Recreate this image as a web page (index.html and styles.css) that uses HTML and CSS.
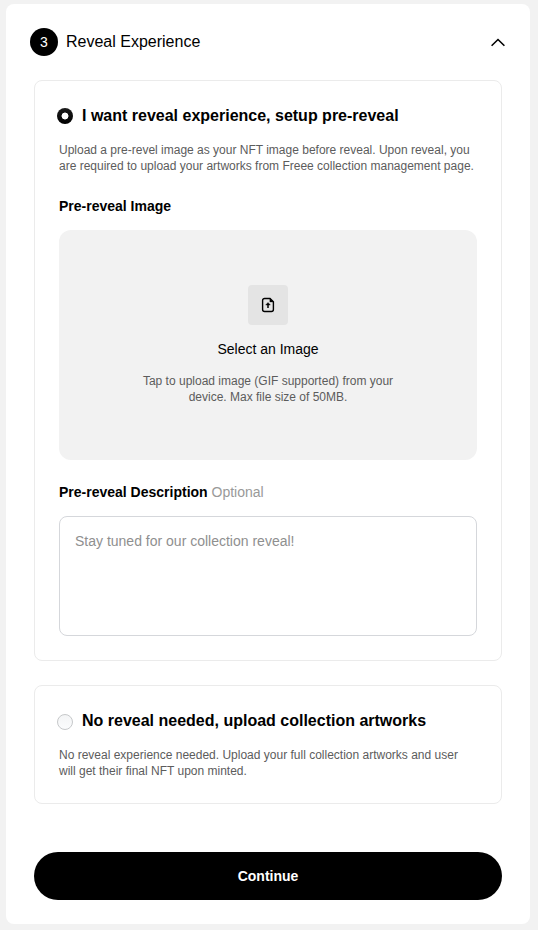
FILE: index.html
```html
<!DOCTYPE html>
<html lang="en">
<head>
<meta charset="utf-8">
<title>Reveal Experience</title>
<link rel="stylesheet" href="styles.css">
</head>
<body>
<main class="panel">
  <header class="head">
    <span class="step">3</span>
    <h1 class="title">Reveal Experience</h1>
    <svg class="chevron" width="16" height="10" viewBox="0 0 16 10"><path d="M1.600 8.800 8 2.500l6.400 6.300" fill="none" stroke="#000" stroke-width="1.600"/></svg>
  </header>
  <section class="card card-reveal">
    <div class="option"><span class="radio radio-on"></span><h2 class="option-title">I want reveal experience, setup pre-reveal</h2></div>
    <p class="note">Upload a pre-revel image as your NFT image before reveal. Upon reveal, you<br>are required to upload your artworks from Freee collection management page.</p>
    <h3 class="label">Pre-reveal Image</h3>
    <div class="upload">
      <span class="upload-icon"><svg width="16" height="16" viewBox="0 0 16 16" fill="none" stroke="#000" stroke-width="1.400"><path d="M10 1.500H4.600a2 2 0 0 0-2 2v9a2 2 0 0 0 2 2h6.800a2 2 0 0 0 2-2V4.900z"/><path d="M9.900 1.800v3.100h3.300z" fill="#000" stroke-width=".4"/><path d="M8 10.900V7" stroke-width="1.500"/><path d="M5.700 8 8 5.500 10.300 8z" fill="#000" stroke-width=".4"/></svg></span>
      <div class="upload-title">Select an Image</div>
      <p class="upload-note">Tap to upload image (GIF supported) from your<br>device. Max file size of 50MB.</p>
    </div>
    <h3 class="label label-desc">Pre-reveal Description <span class="optional">Optional</span></h3>
    <div class="field">Stay tuned for our collection reveal!</div>
  </section>
  <section class="card card-none">
    <div class="option"><span class="radio radio-off"></span><h2 class="option-title">No reveal needed, upload collection artworks</h2></div>
    <p class="note">No reveal experience needed. Upload your full collection artworks and user<br>will get their final NFT upon minted.</p>
  </section>
  <button class="continue">Continue</button>
</main>
</body>
</html>
```
FILE: styles.css
```css
* { box-sizing: border-box; }
body { margin: 0; padding: 4px 8px 6px 6px; height: 930px; background: #f2f2f2; font-family: "Liberation Sans", Arial, sans-serif; color: #000; }
h1, h2, h3, p { margin: 0; }
.panel { height: 920px; padding: 24px 28px; background: #fff; border-radius: 8px; }
.head { display: flex; align-items: center; height: 28px; margin: 0 -4px 24px; }
.step { width: 28px; height: 28px; border-radius: 50%; background: #000; color: #fff; font-size: 14px; line-height: 28px; text-align: center; }
.title { flex: 1; margin-left: 8px; font-size: 16px; font-weight: 400; line-height: 24px; }
.chevron { display: block; }
.card { border: 1px solid #ebebeb; border-radius: 8px; padding: 23px 24px; }
.card-reveal { height: 581px; }
.card-none { height: 119px; margin-top: 24px; }
.option { display: flex; align-items: center; height: 24px; margin-left: -2px; }
.radio { width: 16px; height: 16px; border-radius: 50%; }
.radio-on { background: radial-gradient(circle, #fff 3.100px, transparent 3.800px), linear-gradient(#1c1c1c, #000); }
.radio-off { margin-top: 2px; border: 1px solid #c6c8ca; background: linear-gradient(#f4f5f6, #fbfcfd); }
.option-title { margin-left: 9px; font-size: 16px; line-height: 24px; white-space: nowrap; }
.note { margin-top: 14px; font-size: 12px; line-height: 16px; color: #5c5c5c; white-space: nowrap; }
.label { margin-top: 22px; font-size: 14px; line-height: 20px; }
.upload { display: flex; flex-direction: column; align-items: center; height: 230px; margin-top: 14px; padding-top: 55px; border-radius: 12px; background: #f2f2f2; }
.upload-icon { display: flex; align-items: center; justify-content: center; width: 40px; height: 40px; border-radius: 4px; background: #e4e4e4; }
.upload-title { margin-top: 14px; font-size: 14px; line-height: 20px; }
.upload-note { margin-top: 14px; font-size: 12px; line-height: 16px; color: #5c5c5c; text-align: center; }
.optional { font-weight: 400; color: #999; }
.field { height: 120px; margin-top: 14px; padding: 14px 15px; border: 1px solid #d5d7db; border-radius: 8px; font-size: 14px; line-height: 20px; color: #8f8f8f; }
.continue { display: block; width: 100%; height: 48px; margin-top: 48px; border: 0; border-radius: 24px; background: #000; color: #fff; font: 700 14px/20px "Liberation Sans", Arial, sans-serif; }
```
